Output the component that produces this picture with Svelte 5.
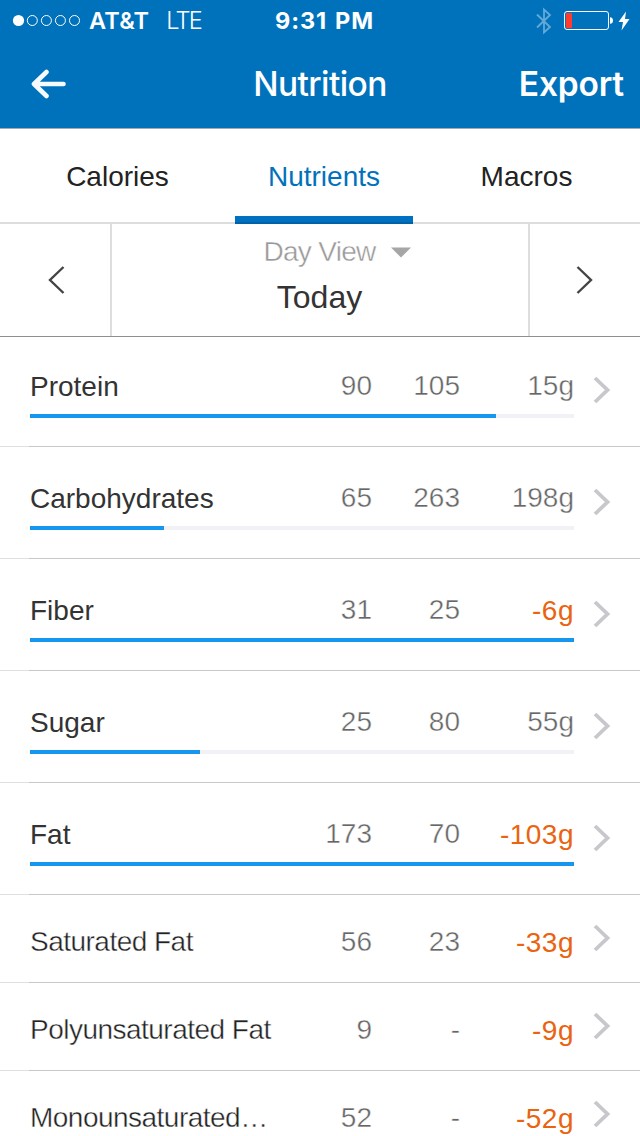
<script lang="ts">
  interface Nutrient {
    name: string;
    total: string;
    goal: string;
    left: string;
    // width of the filled bar in px, sub nutrients have none
    bar?: number;
  }

  const TABS = ['Calories', 'Nutrients', 'Macros'];

  const nutrients: Nutrient[] = [
    { name: 'Protein', total: '90', goal: '105', left: '15g', bar: 466 },
    { name: 'Carbohydrates', total: '65', goal: '263', left: '198g', bar: 134 },
    { name: 'Fiber', total: '31', goal: '25', left: '-6g', bar: 544 },
    { name: 'Sugar', total: '25', goal: '80', left: '55g', bar: 170 },
    { name: 'Fat', total: '173', goal: '70', left: '-103g', bar: 544 },
    { name: 'Saturated Fat', total: '56', goal: '23', left: '-33g' },
    { name: 'Polyunsaturated Fat', total: '9', goal: '-', left: '-9g' },
    { name: 'Monounsaturated…', total: '52', goal: '-', left: '-52g' },
  ];

  let activeTab = $state('Nutrients');
</script>

<div class="screen">
  <header>
    <div class="status">
      <div class="carrier">
        <svg width="70" height="14" viewBox="0 0 70 14">
          <circle cx="6.5" cy="6.5" r="5.6" fill="#fff" />
          {#each [20.3, 34.4, 48.4, 62.5] as cx}
            <circle {cx} cy="6.5" r="5" fill="none" stroke="#fff" />
          {/each}
        </svg>
        <span class="att">AT&amp;T</span>
        <span class="lte">LTE</span>
      </div>
      <div class="time">9:31 PM</div>
      <div class="indicators">
        <svg class="bluetooth" width="16" height="28" viewBox="0 0 16 28">
          <path d="M1 7.5L14 20L8 25.5V2.5L14 8L1 20.5" fill="none" stroke="#65a9d8" stroke-width="1.8" />
        </svg>
        <svg class="battery" width="50" height="20" viewBox="0 0 50 20">
          <rect x="0.5" y="0.5" width="44" height="18" rx="2.5" fill="none" stroke="#fff" />
          <rect x="2" y="2" width="6" height="15" rx="1" fill="#ff3b30" />
          <path d="M46 6.2C48 6.2 49 7.5 49 9.5S48 12.8 46 12.8Z" fill="#fff" />
        </svg>
        <svg width="12" height="20" viewBox="0 0 12 20">
          <path d="M8 0.5L0.5 11H5L3.5 19.5L11.5 8H7Z" fill="#fff" />
        </svg>
      </div>
    </div>
    <nav class="titlebar">
      <button class="back" aria-label="Back">
        <svg width="36" height="30" viewBox="0 0 36 30">
          <path d="M15.5 3L3 15L15.5 27M3 15H32.5" fill="none" stroke="#f7fafc" stroke-width="4.6" stroke-linecap="round" stroke-linejoin="round" />
        </svg>
      </button>
      <h1>Nutrition</h1>
      <button class="export">Export</button>
    </nav>
  </header>

  <div class="tabs">
    {#each TABS as tab}
      <button class="tab" class:active={tab === activeTab} onclick={() => (activeTab = tab)}>
        {tab}
      </button>
    {/each}
  </div>

  <div class="day">
    <button class="step prev" aria-label="Previous day">
      <svg width="18" height="28" viewBox="0 0 18 28">
        <path d="M15.5 1L2 14L15.5 27" fill="none" stroke="#444" stroke-width="2.4" />
      </svg>
    </button>
    <div class="day-view">
      <div class="mode">
        <span class="light">Day View</span>
        <svg width="20" height="11" viewBox="0 0 20 11">
          <path d="M0 0.5H20L10 10.5Z" fill="#a6a6a6" />
        </svg>
      </div>
      <div class="today">Today</div>
    </div>
    <button class="step next" aria-label="Next day">
      <svg width="18" height="28" viewBox="0 0 18 28">
        <path d="M2.5 1L16 14L2.5 27" fill="none" stroke="#444" stroke-width="2.4" />
      </svg>
    </button>
  </div>

  <div class="list">
    {#each nutrients as n}
      {@const isSub = n.bar === undefined}
      <div class="row" class:sub={isSub}>
        <div class="content">
          <div class="cells">
            <span class="name" class:light={isSub}>{n.name}</span>
            <span class="num light">{n.total}</span>
            <span class="num light">{n.goal}</span>
            {#if n.left.startsWith('-')}
              <span class="num over">{n.left}</span>
            {:else}
              <span class="num light">{n.left}</span>
            {/if}
          </div>
          {#if !isSub}
            <div class="track">
              <div class="fill" style="width:{n.bar}px"></div>
            </div>
          {/if}
        </div>
        <svg class="chevron" width="18" height="28" viewBox="0 0 18 28">
          <path d="M2 2L14.5 14L2 26" fill="none" stroke="#c7c7cc" stroke-width="3.8" />
        </svg>
      </div>
    {/each}
  </div>
</div>

<style>
  :global(body) {
    background: #fff;
    overflow: hidden;
  }

  .screen {
    width: 640px;
    height: 1136px;
    overflow: hidden;
    background: #fff;
    font-family: 'Liberation Sans', Arial, sans-serif;
    font-size: 28px;
    color: #333;
  }

  button {
    padding: 0;
    border: 0;
    background: none;
    font: inherit;
    color: inherit;
  }

  svg {
    display: block;
    flex: none;
  }

  header {
    height: 128px;
    background: #0072bc;
    border-bottom: 1px solid #a3a9ad;
    color: #fff;
    font-family: Inter, sans-serif;
  }

  .status {
    height: 40px;
    padding-top: 1px;
    box-sizing: border-box;
    display: grid;
    grid-template-columns: 1fr auto 1fr;
    align-items: center;
    font-size: 23.5px;
    line-height: 39px;
  }

  .carrier {
    display: flex;
    align-items: center;
    padding-left: 12px;
  }

  .att {
    margin-left: 7px;
    font-weight: 600;
    letter-spacing: 0.2px;
  }

  .lte {
    margin-left: 17px;
    font-weight: 300;
    letter-spacing: -1.8px;
  }

  .time {
    margin-left: 9px;
    font-weight: 700;
    letter-spacing: 0.9px;
    word-spacing: 1.5px;
  }

  .indicators {
    display: flex;
    align-items: center;
    justify-content: flex-end;
    padding-right: 10px;
  }

  .battery { margin: 0 4px 0 12px; }

  .titlebar {
    height: 88px;
    padding-top: 1px;
    box-sizing: border-box;
    display: grid;
    grid-template-columns: 1fr auto 1fr;
    align-items: center;
    font-size: 33.5px;
    line-height: 87px;
  }

  .back {
    margin: -1px 0 0 31px;
    justify-self: start;
  }

  h1 {
    margin: 0;
    font-size: 33.5px;
    font-weight: 500;
    letter-spacing: -0.6px;
  }

  .export {
    justify-self: end;
    padding-right: 16px;
    font-weight: 600;
    letter-spacing: -0.2px;
  }

  .tabs {
    height: 93px;
    display: grid;
    grid-template-columns: 235px 178px 227px;
    border-bottom: 2px solid #ddd;
    color: #222;
  }

  .tab {
    margin-bottom: -2px;
    padding-top: 8px;
    border-bottom: 8px solid transparent;
    line-height: 79px;
  }

  .tab.active {
    color: #0072bc;
    border-image: linear-gradient(0deg, #0061a6 2px, #0070c0 2px) 0 0 8 0;
  }

  .day {
    height: 112px;
    display: grid;
    grid-template-columns: 110px 1fr 110px;
    border-bottom: 1px solid #8f8f8f;
  }

  .step {
    display: flex;
    align-items: center;
    justify-content: center;
  }

  .prev { padding-left: 3px; }
  .next { padding-right: 3px; }

  .day-view {
    padding-right: 1px;
    border-left: 2px solid #ddd;
    border-right: 2px solid #ddd;
    text-align: center;
  }

  .mode {
    display: flex;
    justify-content: center;
    align-items: center;
    gap: 15px;
    padding: 12px 0 0 35px;
    line-height: 32px;
    letter-spacing: -0.7px;
    color: #999;
  }

  .today {
    padding-top: 10px;
    font-size: 32px;
    line-height: 38px;
  }

  /* white outline over the fill thins the strokes */
  .light {
    -webkit-text-stroke: 0.4px #fff;
  }

  .row {
    height: 112px;
    box-sizing: border-box;
    display: flex;
    align-items: center;
    padding-left: 30px;
    border-bottom: 1px solid;
    border-image: linear-gradient(90deg, #e0e0e0 30px, #c8c7cc 30px) 1;
  }

  .row:first-child { margin-top: -2px; }
  .row.sub { height: 88px; }

  .content {
    width: 544px;
    align-self: flex-start;
    padding-top: 36px;
  }

  .sub .content { padding-top: 31px; }

  .cells {
    display: grid;
    grid-template-columns: 240px 102px 88px 114px;
    line-height: 32px;
    white-space: nowrap;
  }

  .name.light {
    color: #222;
    letter-spacing: -0.52px;
  }

  .num {
    text-align: right;
    color: #666;
    position: relative;
    top: -1px;
  }

  .sub .num { top: 0; }

  .num.over {
    top: 0;
    color: #ea6410;
    letter-spacing: 0.5px;
  }

  .sub .over { top: 1px; }

  .track {
    height: 4px;
    margin-top: 11px;
    background: #f2f2f6;
  }

  .fill {
    height: 4px;
    background: #1796f0;
  }

  .chevron { margin: -2px 0 0 19px; }
</style>
